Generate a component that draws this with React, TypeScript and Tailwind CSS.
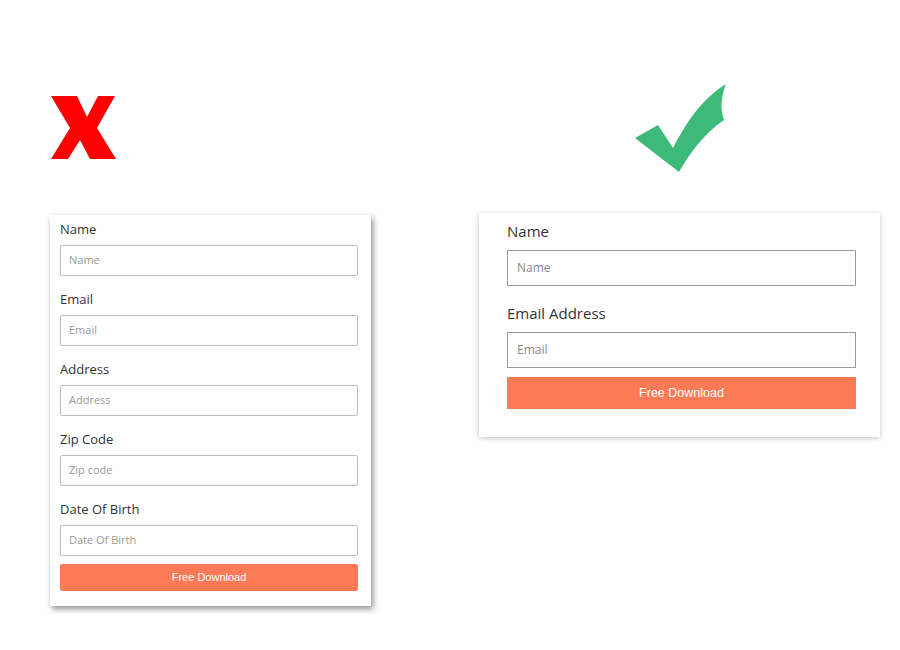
import React from 'react'

const badFields = [
  { label: 'Name', placeholder: 'Name' },
  { label: 'Email', placeholder: 'Email' },
  { label: 'Address', placeholder: 'Address' },
  { label: 'Zip Code', placeholder: 'Zip code' },
  { label: 'Date Of Birth', placeholder: 'Date Of Birth' },
]

const goodFields = [
  { label: 'Name', placeholder: 'Name' },
  { label: 'Email Address', placeholder: 'Email' },
]

function CrossMark() {
  return (
    <svg width="67" height="66" viewBox="50 93 67 66" className="block">
      <polygon
        points="51,95 77,95 87,116 98,95 115,95 97,127 116,158 90,158 80,139 68,158 51,158 70,127"
        fill="#fe0000"
      />
    </svg>
  )
}

function CheckMark() {
  return (
    <svg width="93" height="92" viewBox="633 80 93 92" className="block">
      <path
        d="M634 136 L657 123 L672 146 C688 115 704 95 725 82 C720 95 719 107 723 118 C704 131 690 149 678 170 Z"
        fill="#3dba78"
      />
    </svg>
  )
}

export default function App() {
  return (
    <div
      className="w-[900px] h-[650px] bg-white flex items-start pl-[50px]"
      style={{ fontFamily: '"Open Sans", sans-serif' }}
    >
      {/* Bad example */}
      <div className="flex flex-col pt-[94px] w-[321px]">
        <CrossMark />
        <div className="mt-[55px] bg-white w-[321px] pt-[5px] pl-[10px] pr-[13px] pb-[15px] shadow-[2px_3px_6px_rgba(0,0,0,0.45)]">
          {badFields.map(f => (
            <div key={f.label} className="mt-[14px] first:mt-0">
              <div className="text-[13px] leading-[18px] text-[#333]">{f.label}</div>
              <div className="mt-[7px] h-[31px] border border-[#bdbdbd] rounded-[2px] flex items-center pl-[8px] text-[11px] text-[#999]">
                {f.placeholder}
              </div>
            </div>
          ))}
          <div
            className="mt-[8px] h-[27px] bg-[#fd7a57] rounded-[2px] flex items-center justify-center text-white text-[11px]"
            style={{ fontFamily: '"Liberation Sans", Arial, sans-serif' }}
          >
            Free Download
          </div>
        </div>
      </div>

      {/* Good example */}
      <div className="flex flex-col pt-[82px] ml-[108px] w-[401px]">
        <div className="ml-[155px]">
          <CheckMark />
        </div>
        <div className="mt-[39px] bg-white w-[401px] pt-[8px] pl-[28px] pr-[24px] pb-[28px] shadow-[0_1px_5px_rgba(0,0,0,0.25)]">
          {goodFields.map(f => (
            <div key={f.label} className="mt-[17px] first:mt-0">
              <div className="text-[15px] leading-[20px] text-[#333]">{f.label}</div>
              <div className="mt-[9px] h-[36px] border border-[#9a9a9a] flex items-center pl-[9px] text-[12px] text-[#888]">
                {f.placeholder}
              </div>
            </div>
          ))}
          <div
            className="mt-[9px] h-[32px] bg-[#fd7a57] flex items-center justify-center text-white text-[12.5px]"
            style={{ fontFamily: '"Liberation Sans", Arial, sans-serif' }}
          >
            Free Download
          </div>
        </div>
      </div>
    </div>
  )
}
